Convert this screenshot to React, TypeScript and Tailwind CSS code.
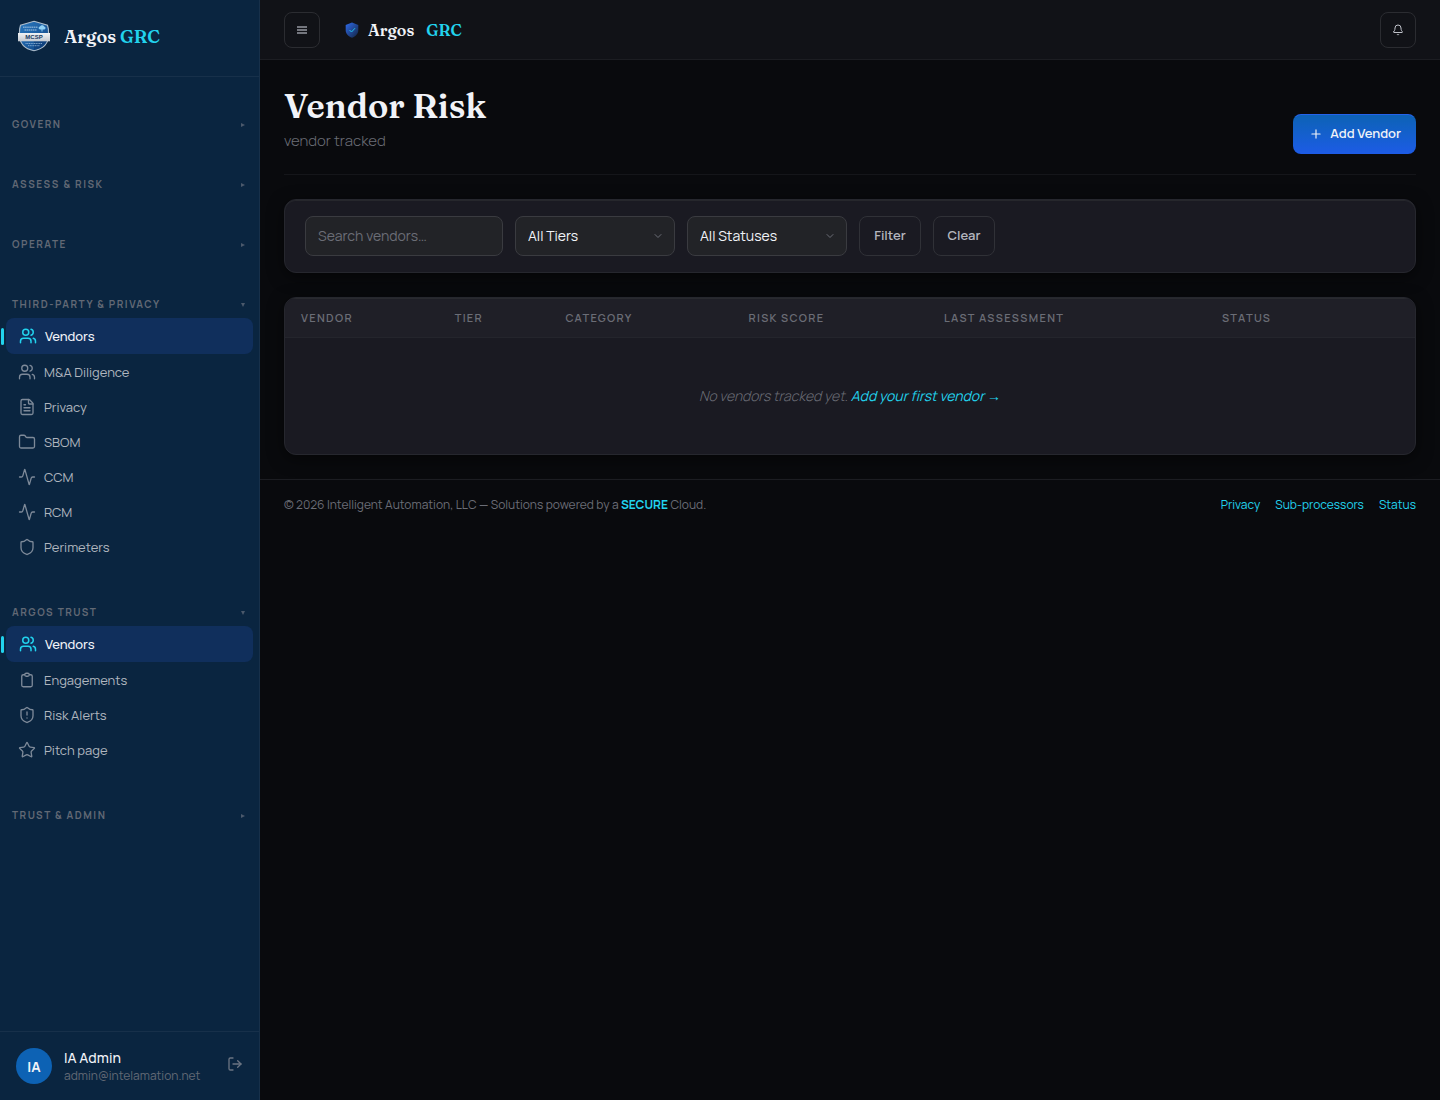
import {
  Activity, Bell, ChevronDown, FileText, Folder, LogOut, Plus,
  Shield, ShieldAlert, Star, Users,
} from 'lucide-react';
import type { ComponentType } from 'react';

type IconProps = { size?: number | string; strokeWidth?: number | string; className?: string };
type Item = { label: string; icon: ComponentType<IconProps>; active?: boolean };
type Group = { title: string; items?: Item[] };

function ClipboardIcon({ size = 18, strokeWidth = 2, className }: IconProps) {
  return (
    <svg viewBox="0 0 24 24" width={size} height={size} fill="none" stroke="currentColor" strokeWidth={strokeWidth} strokeLinecap="round" strokeLinejoin="round" className={className} aria-hidden="true">
      <path d="M9 5H7a2 2 0 0 0-2 2v12a2 2 0 0 0 2 2h10a2 2 0 0 0 2-2V7a2 2 0 0 0-2-2h-2M9 5a2 2 0 0 0 2 2h2a2 2 0 0 0 2-2M9 5a2 2 0 0 1 2-2h2a2 2 0 0 1 2 2" />
    </svg>
  );
}

const groups: Group[] = [
  { title: 'Govern' },
  { title: 'Assess & Risk' },
  { title: 'Operate' },
  {
    title: 'Third-Party & Privacy',
    items: [
      { label: 'Vendors', icon: Users, active: true },
      { label: 'M&A Diligence', icon: Users },
      { label: 'Privacy', icon: FileText },
      { label: 'SBOM', icon: Folder },
      { label: 'CCM', icon: Activity },
      { label: 'RCM', icon: Activity },
      { label: 'Perimeters', icon: Shield },
    ],
  },
  {
    title: 'Argos Trust',
    items: [
      { label: 'Vendors', icon: Users, active: true },
      { label: 'Engagements', icon: ClipboardIcon },
      { label: 'Risk Alerts', icon: ShieldAlert },
      { label: 'Pitch page', icon: Star },
    ],
  },
  { title: 'Trust & Admin' },
];

const columns = [
  { label: 'Vendor', width: 'w-[13.6%]' },
  { label: 'Tier', width: 'w-[9.8%]' },
  { label: 'Category', width: 'w-[16.2%]' },
  { label: 'Risk Score', width: 'w-[17.3%]' },
  { label: 'Last Assessment', width: 'w-[24.6%]' },
  { label: 'Status', width: 'w-[18.5%]' },
];

function BadgeLogo() {
  return (
    <svg viewBox="0 0 36 36" className="size-9 shrink-0" aria-hidden="true">
      <defs>
        <linearGradient id="badge" x1="0" y1="0" x2="1" y2="1">
          <stop offset="0" stopColor="#2a78bd" />
          <stop offset="0.5" stopColor="#1d5fa3" />
          <stop offset="1" stopColor="#0d3f7c" />
        </linearGradient>
        <linearGradient id="band" x1="0" y1="0" x2="0" y2="1">
          <stop offset="0" stopColor="#f1f3f5" />
          <stop offset="1" stopColor="#c3c9d1" />
        </linearGradient>
      </defs>
      <path d="M18 3.300 31.500 7.300c1 2.600 1.200 5.800 1.100 9.200C32.500 25.500 27 31 18 32.700 9 31 3.500 25.500 3.400 16.500 3.300 13.100 3.500 9.900 4.500 7.300Z" fill="url(#badge)" stroke="#aebdcb" strokeWidth="1.100" />
      <path d="M18 22v10c6-1.500 11-4 13-9Z" fill="#0b3a74" opacity=".6" />
      <path d="M7 9.200h15M8.500 12h12" stroke="#b7d3ec" strokeWidth="1.500" strokeDasharray="1.600 .5" opacity=".6" />
      <path d="M24 8.500c1-1.800 3.500-1.800 4.200 0 1.800.3 1.800 2.800 0 3h-4c-2-.2-2-2.800-.2-3Z" fill="#8fd0f5" />
      <path d="M26 11v2.500" stroke="#8fd0f5" strokeWidth="1" />
      <path d="M2 15h32v8.300H2Z" fill="url(#band)" />
      <text x="18" y="21.300" textAnchor="middle" fontFamily="Liberation Sans, sans-serif" fontSize="6" fontWeight="700" fill="#14365f">MCSP</text>
      <path d="M9.500 25.500h17M12 27.700h12" stroke="#a9c8e6" strokeWidth="1" strokeDasharray="1.200 .5" opacity=".7" />
    </svg>
  );
}

function ShieldLogo() {
  return (
    <svg viewBox="0 0 16 18" className="h-[18px] w-4" aria-hidden="true">
      <defs>
        <linearGradient id="shield" x1="0" y1="0" x2="1" y2="1">
          <stop offset="0" stopColor="#2f6bec" />
          <stop offset="1" stopColor="#12233f" />
        </linearGradient>
      </defs>
      <path d="M8 1.500 14.300 4v5c0 4-2.600 6.300-6.300 7.700C4.300 15.300 1.700 13 1.700 9V4Z" fill="url(#shield)" />
      <path d="m5.500 9 2 2L11 7.200" fill="none" stroke="#22c5e8" strokeWidth="1" />
    </svg>
  );
}

function NavGroup({ title, items }: Group) {
  return (
    <section>
      <button
        type="button"
        aria-expanded={Boolean(items)}
        className="flex h-7 w-full items-center justify-between pt-px pr-[14px] pl-3 text-[10px] font-bold tracking-[0.15em] text-[#626975] uppercase"
      >
        {title}
        <svg viewBox="0 0 4 4" className="size-1 text-[#4b596b]" fill="currentColor" aria-hidden="true">
          <path d={items ? 'M0 0h4L2 4Z' : 'M0 0v4l4-2Z'} />
        </svg>
      </button>
      {items && (
        <ul className="px-[6px] pb-[2px]">
          {items.map(({ label, icon: Icon, active }) => (
            <li key={label} className="relative">
              {active && <span className="absolute top-[10px] -left-[5px] h-[17px] w-[3px] rounded-xs bg-[#22d3ee]" />}
              <a
                href="#"
                className={
                  active
                    ? 'flex h-9 items-center gap-2 rounded-lg bg-[#102f5c] px-[13px] text-[13px] font-medium text-[#f1f3f8]'
                    : 'flex h-[35px] items-center gap-2 px-3 text-[13px] text-[#b0b6bf]'
                }
              >
                <Icon size={18} strokeWidth={active ? 2 : 1.75} className={active ? 'text-[#22d3ee]' : 'text-[#7e8a99]'} />
                <span className={active ? 'pt-px' : 'pt-[2px]'}>{label}</span>
              </a>
            </li>
          ))}
        </ul>
      )}
    </section>
  );
}

function FilterSelect({ label, id }: { label: string; id: string }) {
  return (
    <div className="relative w-40">
      <select id={id} aria-label={label} className="h-10 w-full appearance-none rounded-lg border border-[#3a3b40] bg-[#222327] px-3 pb-px text-[14px] leading-5 text-[#f1f3f8]">
        <option>{label}</option>
      </select>
      <ChevronDown size={12} className="pointer-events-none absolute top-[14px] right-[11px] text-[#6b6d76]" />
    </div>
  );
}

export default function App() {
  return (
    <div className="flex min-h-screen bg-[#090a0d] font-['Manrope','Inter',sans-serif] text-[#f1f3f8]">
      <aside className="sticky top-0 flex h-screen w-[260px] shrink-0 flex-col border-r border-[#17304a] bg-[#0a2540]">
        <div className="flex items-center gap-3 border-b border-[#17304a] px-4 pt-[18px] pb-[22px]">
          <BadgeLogo />
          <span className="pt-[2px] font-['Fraunces','Liberation_Serif',serif] text-[18px] leading-[34px] font-semibold">
            Argos <span className="text-[#22d3ee]">GRC</span>
          </span>
        </div>
        <nav className="flex flex-1 flex-col gap-8 overflow-y-auto pt-[33px]">
          {groups.map((group) => <NavGroup key={group.title} {...group} />)}
        </nav>
        <div className="flex items-center gap-3 border-t border-[#17304a] p-4">
          <div className="flex size-9 items-center justify-center rounded-full bg-[#0d62b4] text-[14px] font-bold">IA</div>
          <div className="min-w-0 flex-1">
            <p className="text-[14px] leading-5 font-medium">IA Admin</p>
            <p className="truncate text-[12px] leading-4 text-[#626975]">admin@intelamation.net</p>
          </div>
          <button type="button" aria-label="Sign out" className="pb-1 text-[#6b7482]"><LogOut size={16} /></button>
        </div>
      </aside>

      <div className="min-w-0 flex-1">
        <header className="flex h-[60px] items-center border-b border-[#1c1d22] bg-[#111217] px-6">
          <button type="button" aria-label="Toggle menu" className="flex size-9 items-center justify-center rounded-lg border border-[#2b2c31] text-[#74767e]">
            <svg viewBox="0 0 10 10" className="size-[10px]" stroke="currentColor" strokeWidth="2" aria-hidden="true">
              <path d="M0 2h10M0 5h10M0 8h10" />
            </svg>
          </button>
          <div className="ml-6 flex items-center gap-2">
            <ShieldLogo />
            <span className="flex gap-3 font-['Fraunces','Liberation_Serif',serif] text-[16px] font-semibold">
              <span>Argos</span><span className="text-[#22d3ee]">GRC</span>
            </span>
          </div>
          <button type="button" aria-label="Notifications" className="ml-auto flex size-9 items-center justify-center rounded-lg border border-[#2b2c31] text-[#c0c2ca]">
            <Bell size={12} />
          </button>
        </header>

        <main className="p-6">
          <div className="flex items-end justify-between border-b border-[#15161a] pb-5">
            <div>
              <h1 className="font-['Fraunces','Liberation_Serif',serif] text-[34px] leading-[44px] font-semibold">Vendor Risk</h1>
              <p className="text-[15px] leading-[26px] font-light text-[#6b6d76]">vendor tracked</p>
            </div>
            <button type="button" className="flex h-10 items-center gap-[7px] rounded-lg border border-t-[#2563eb] border-x-transparent border-b-transparent bg-linear-to-b from-[#0d62b4] to-[#1d5be6] bg-origin-border pr-[14px] pl-[15px] text-[13px] font-semibold">
              <Plus size={14} />Add Vendor
            </button>
          </div>

          <form className="mt-6 flex flex-wrap gap-3 rounded-xl border border-[#26272e] bg-[#1a1a22] px-5 py-4 shadow-[inset_0_1px_0_#26272c,0_4px_16px_rgba(0,0,0,0.5)]">
            <input id="search" type="search" aria-label="Search vendors" placeholder="Search vendors…" className="h-10 w-[198px] rounded-lg border border-[#3a3b40] bg-[#222327] px-3 pb-px text-[14px] leading-5 placeholder:text-[#6b6d76]" />
            <FilterSelect id="tier" label="All Tiers" />
            <FilterSelect id="status" label="All Statuses" />
            <button type="submit" className="h-10 w-[62px] rounded-lg border border-[#303137] text-[13px] font-semibold text-[#b4b6bf]">Filter</button>
            <button type="reset" className="h-10 w-[62px] rounded-lg border border-[#303137] text-[13px] font-semibold text-[#b4b6bf]">Clear</button>
          </form>

          <section className="mt-6 overflow-hidden rounded-xl border border-[#26272e] bg-[#1a1a22] shadow-[0_4px_16px_rgba(0,0,0,0.5)]">
            <table className="w-full table-fixed">
              <thead className="bg-[#1f1f27] shadow-[inset_0_1px_0_#292a2f]">
                <tr className="h-[39px] border-b border-[#24252c]">
                  {columns.map(({ label, width }) => (
                    <th key={label} scope="col" className={`${width} px-4 pt-px text-left text-[11px] font-semibold tracking-[0.12em] text-[#6b6d76] uppercase`}>{label}</th>
                  ))}
                </tr>
              </thead>
              <tbody>
                <tr>
                  <td colSpan={6} className="h-[117px] text-center text-[14px] font-light text-[#6b6d76] italic">
                    No vendors tracked yet. <a href="#" className="font-normal text-[#22d3ee]">Add your first vendor <span className="font-['Liberation_Sans']">→</span></a>
                  </td>
                </tr>
              </tbody>
            </table>
          </section>
        </main>

        <footer className="flex items-center justify-between border-t border-[#1c1d22] px-6 py-4 text-[12px] leading-[18px] text-[#6b6d76]">
          <p>© 2026 Intelligent Automation, LLC — Solutions powered by a <strong className="font-bold text-[#22d3ee]">SECURE</strong> Cloud.</p>
          <nav className="flex gap-[15px] text-[#22d3ee]">
            <a href="#">Privacy</a><a href="#">Sub-processors</a><a href="#">Status</a>
          </nav>
        </footer>
      </div>
    </div>
  );
}
